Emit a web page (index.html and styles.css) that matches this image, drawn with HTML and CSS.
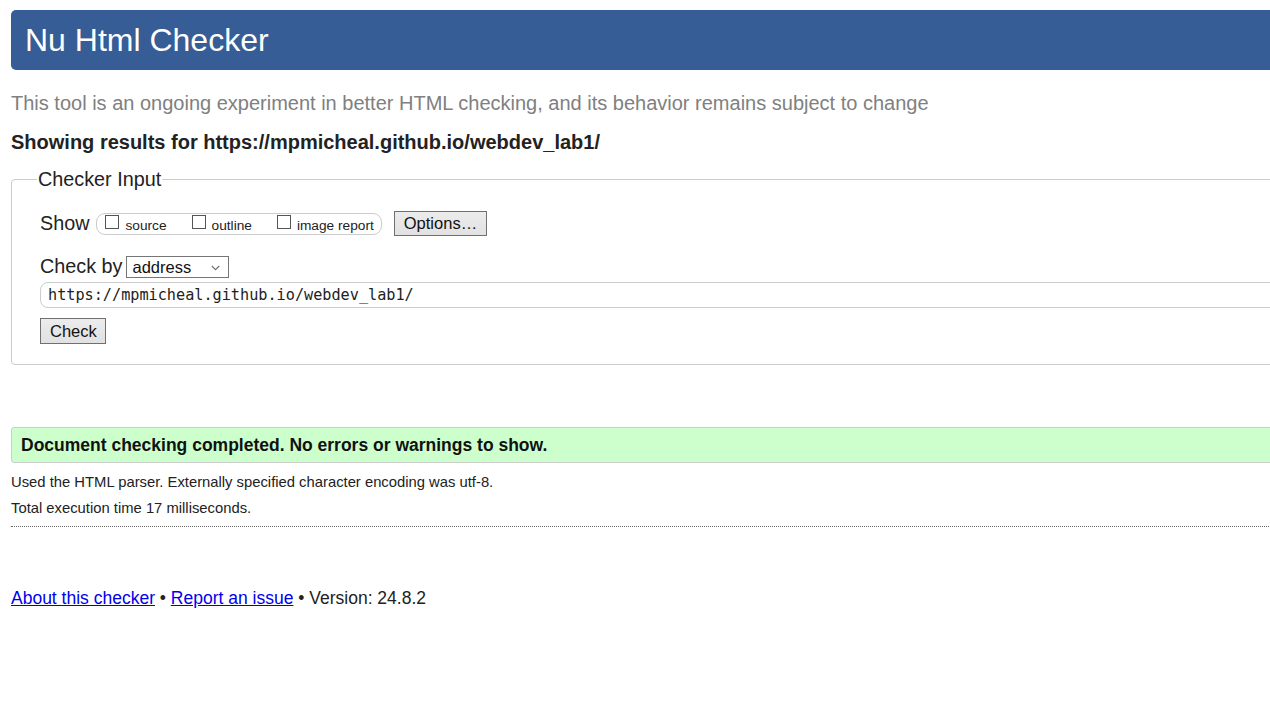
FILE: index.html
```html
<!DOCTYPE html>
<html lang="en">
<head>
<meta charset="utf-8">
<title>Showing results for https://mpmicheal.github.io/webdev_lab1/ - Nu Html Checker</title>
<link rel="stylesheet" href="styles.css">
</head>
<body>
<div class="page">
  <h1 class="banner">Nu Html Checker</h1>
  <p class="intro">This tool is an ongoing experiment in better HTML checking, and its behavior remains subject to change</p>
  <p class="showing">Showing results for https://mpmicheal.github.io/webdev_lab1/</p>

  <fieldset class="input-box">
    <legend class="legend">Checker Input</legend>
    <div class="row row-show">
      <span class="label">Show</span>
      <span class="check-group">
        <label class="opt"><input type="checkbox" class="cb"><span>source</span></label>
        <label class="opt"><input type="checkbox" class="cb"><span>outline</span></label>
        <label class="opt opt-last"><input type="checkbox" class="cb"><span>image report</span></label>
      </span>
      <button class="btn btn-options" type="button">Options…</button>
    </div>
    <div class="row row-by">
      <span class="label">Check by</span>
      <span class="select-wrap">
        <select class="select"><option>address</option></select>
        <svg class="chev" width="9" height="6" viewBox="0 0 9 6"><path d="M0.8 1 L4.5 4.7 L8.2 1" fill="none" stroke="#707070" stroke-width="1.1"/></svg>
      </span>
    </div>
    <input class="url" type="text" value="https://mpmicheal.github.io/webdev_lab1/">
    <div class="row row-submit">
      <button class="btn btn-check" type="submit">Check</button>
    </div>
  </fieldset>

  <p class="success">Document checking completed. No errors or warnings to show.</p>
  <p class="meta meta-first">Used the HTML parser. Externally specified character encoding was utf-8.</p>
  <p class="meta">Total execution time 17 milliseconds.</p>
  <hr class="dotted">

  <p class="footer"><a href="#">About this checker</a> • <a href="#">Report an issue</a> • Version: 24.8.2</p>
</div>
</body>
</html>
```
FILE: styles.css
```css
html, body {
  margin: 0;
  padding: 0;
  overflow: hidden;
  background: #fff;
}
body {
  font-family: "Liberation Sans", Arial, sans-serif;
  color: #222;
}
.page {
  width: 1320px;
  padding: 10px 0 0 11px;
}
.banner {
  margin: 0;
  height: 60px;
  display: flex;
  align-items: center;
  padding-left: 14px;
  background: #365d95;
  color: #fff;
  font-size: 32px;
  font-weight: normal;
  border-radius: 5px;
}
.intro {
  margin: 22px 0 0;
  font-size: 20px;
  line-height: 23px;
  color: #808080;
}
.showing {
  margin: 16px 0 0;
  font-size: 20px;
  line-height: 23px;
  font-weight: bold;
  color: #222;
}
.input-box {
  margin: 14px 0 0;
  padding: 20px 0 20px 28px;
  border: 1px solid #ccc;
  border-radius: 4px;
  min-width: 0;
}
.legend {
  font-size: 19.8px;
  line-height: 23px;
  padding: 0 1px;
  margin-left: -3px;
  color: #222;
}
.row {
  display: flex;
  align-items: center;
}
.label {
  font-size: 19.8px;
  line-height: 23px;
}
.row-show {
  height: 25px;
}
.row-show .label {
  margin-right: 7px;
}
.check-group {
  display: flex;
  align-items: flex-start;
  height: 22px;
  box-sizing: border-box;
  border: 1px solid #ccc;
  border-radius: 9px;
  padding: 0 0 0 8px;
  margin-top: 1px;
}
.opt {
  display: flex;
  align-items: flex-start;
  font-size: 13.7px;
  margin-right: 25px;
}
.opt-last {
  margin-right: 7px;
}
.opt span {
  margin-left: 6px;
  margin-top: 4px;
  line-height: 16px;
}
.cb {
  appearance: none;
  -webkit-appearance: none;
  margin: 1px 0 0;
  width: 14px;
  height: 14px;
  box-sizing: border-box;
  border: 1.5px solid #555;
  background: #fff;
  border-radius: 0;
}
.btn {
  font-family: "Liberation Sans", Arial, sans-serif;
  font-size: 16.5px;
  color: #111;
  background: linear-gradient(#ececec, #e1e1e1);
  border: 1px solid #707070;
  border-radius: 0;
  padding: 0 9px;
  box-sizing: border-box;
}
.btn-options {
  margin-left: 12px;
  height: 25px;
  width: 93px;
}
.row-by {
  margin-top: 19px;
  height: 23px;
}
.row-by .label {
  margin-right: 4px;
}
.select-wrap {
  position: relative;
  display: inline-flex;
}
.select {
  appearance: none;
  -webkit-appearance: none;
  width: 103px;
  height: 22px;
  box-sizing: border-box;
  border: 1px solid #767676;
  border-radius: 0;
  background: #fff;
  font-family: "Liberation Sans", Arial, sans-serif;
  font-size: 16.5px;
  color: #111;
  padding: 0 0 0 5px;
}
.chev {
  position: absolute;
  right: 9px;
  top: 9px;
  pointer-events: none;
}
.url {
  display: block;
  margin-top: 4px;
  width: 1300px;
  height: 26px;
  box-sizing: border-box;
  border: 1px solid #ccc;
  border-radius: 8px;
  padding: 0 7px;
  font-family: "DejaVu Sans Mono", "Liberation Mono", monospace;
  font-size: 15.2px;
  color: #222;
  outline: none;
}
.row-submit {
  margin-top: 10px;
}
.btn-check {
  height: 26px;
  width: 66px;
}
.success {
  margin: 62px 0 0;
  height: 36px;
  box-sizing: border-box;
  display: flex;
  align-items: center;
  padding-left: 9px;
  background: #ccffcc;
  border: 1px solid #ccc;
  border-radius: 3px;
  font-size: 17.5px;
  font-weight: bold;
  color: #111;
}
.meta {
  margin: 9px 0 0;
  font-size: 14.8px;
  line-height: 17px;
  color: #222;
}
.meta-first {
  margin-top: 11px;
}
.dotted {
  margin: 9px 0 0;
  border: 0;
  border-top: 1px dotted #666;
  height: 0;
}
.footer {
  margin: 61px 0 0;
  font-size: 17.5px;
  line-height: 20px;
  color: #222;
}
.footer a {
  color: #0000ee;
  text-decoration: underline;
}
```
